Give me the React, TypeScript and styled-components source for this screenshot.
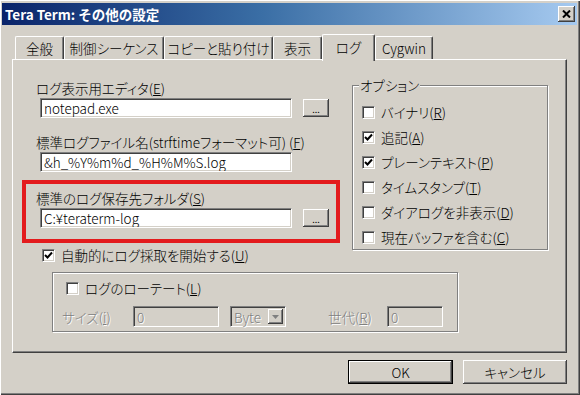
import styled, { createGlobalStyle } from "styled-components";

const face = "#d4d0c8";
const shadow = "#808080";
const darkShadow = "#404040";
const uiFont = `"Noto Sans CJK JP", "Liberation Sans", sans-serif`;

const GlobalStyle = createGlobalStyle`
  html, body {
    margin: 0;
    padding: 0;
    background: ${face};
    overflow: hidden;
  }
  body {
    font-family: ${uiFont};
    font-size: 13.5px;
    font-weight: 300;
    font-feature-settings: "palt";
    color: #000;
  }
`;

const Window = styled.div`
  box-sizing: border-box;
  width: 580px;
  height: 395px;
  padding: 3px 3px 0 2px;
  background: ${face};
  box-shadow: inset 1px 1px 0 #fff, inset -1px -1px 0 ${darkShadow},
    inset -2px -2px 0 ${shadow};
`;

const TitleBar = styled.div`
  display: flex;
  align-items: center;
  height: 22px;
  padding: 0 2px 0 3px;
  background: linear-gradient(to right, #0a246a 0%, #3a6ea5 45%, #a6caf0 100%);
`;

const TitleText = styled.span`
  color: #fff;
  font-weight: bold;
  font-size: 13.5px;
  font-feature-settings: normal;
`;

const CloseButton = styled.button`
  margin-left: auto;
  width: 17px;
  height: 16px;
  padding: 0;
  border: none;
  background: ${face};
  display: flex;
  align-items: center;
  justify-content: center;
  box-shadow: inset -1px -1px 0 ${darkShadow}, inset 1px 1px 0 #fff,
    inset -2px -2px 0 ${shadow};
`;

const Body = styled.div`
  padding: 9px 10px 0 10px;
`;

const TabStrip = styled.div`
  position: relative;
  z-index: 1;
  display: flex;
  align-items: flex-end;
  height: 27px;
  margin-bottom: -2px;
  padding-left: 3px;
`;

const Tab = styled.div<{ $width: number; $active?: boolean }>`
  box-sizing: border-box;
  width: ${(p) => p.$width}px;
  height: ${(p) => (p.$active ? 27 : 23)}px;
  margin-bottom: ${(p) => (p.$active ? 0 : 2)}px;
  display: flex;
  align-items: ${(p) => (p.$active ? "flex-start" : "center")};
  padding-top: ${(p) => (p.$active ? 4 : 0)}px;
  justify-content: center;
  background: ${face};
  border-top: 1px solid #fff;
  border-left: 1px solid #fff;
  border-right: 1px solid ${darkShadow};
  border-radius: 2px 2px 0 0;
  box-shadow: inset -1px 0 0 ${shadow};
  line-height: 16px;
`;

const Panel = styled.div`
  box-sizing: border-box;
  height: 294px;
  padding: 17px 0 0 9px;
  border-top: 1px solid #fff;
  border-left: 1px solid #fff;
  border-right: 1px solid ${darkShadow};
  border-bottom: 1px solid ${darkShadow};
  box-shadow: inset -1px -1px 0 ${shadow};
`;

const TopGrid = styled.div`
  display: grid;
  grid-template-columns: 318px 196px;
  column-gap: 12px;
  align-items: start;
`;

const LeftColumn = styled.div`
  display: flex;
  flex-direction: column;
  padding-top: 3px;
`;

const Field = styled.div<{ $inset: number; $gap?: number }>`
  padding-left: ${(p) => p.$inset}px;
  margin-top: ${(p) => p.$gap ?? 0}px;
`;

const Label = styled.div<{ $disabled?: boolean }>`
  height: 16px;
  line-height: 16px;
  white-space: nowrap;
  color: ${(p) => (p.$disabled ? shadow : "#000")};
  text-shadow: ${(p) => (p.$disabled ? "1px 1px 0 #fff" : "none")};
`;

const InputRow = styled.div`
  display: flex;
  align-items: center;
  margin-top: 2px;
  padding-left: 4px;
`;

const TextBox = styled.input<{ $width: number }>`
  box-sizing: border-box;
  width: ${(p) => p.$width}px;
  height: 20px;
  margin: 0;
  padding: 0 0 0 3px;
  font-family: ${uiFont};
  font-size: 13.5px;
  font-weight: 300;
  color: #000;
  background: #fff;
  border-top: 1px solid ${shadow};
  border-left: 1px solid ${shadow};
  border-right: 1px solid #fff;
  border-bottom: 1px solid #fff;
  box-shadow: inset 1px 1px 0 ${darkShadow}, inset -1px -1px 0 ${face};
  outline: none;

  &:disabled {
    height: 21px;
    background: ${face};
    color: ${shadow};
    text-shadow: 1px 1px 0 #fff;
  }
`;

const BrowseButton = styled.button`
  width: 26px;
  height: 18px;
  margin-left: 11px;
  padding: 0 0 3px;
  border: none;
  background: ${face};
  font-family: ${uiFont};
  font-size: 9px;
  line-height: 1;
  display: flex;
  align-items: flex-end;
  justify-content: center;
  box-shadow: inset -1px -1px 0 ${darkShadow}, inset 1px 1px 0 #fff,
    inset -2px -2px 0 ${shadow};
`;

const Highlight = styled.div`
  margin-top: 8px;
  padding: 6px 0 11px 0;
  border: 4px solid #e31b1d;
`;

const CheckRow = styled.div<{ $offset?: number }>`
  display: flex;
  align-items: center;
  gap: 6px;
  height: 16px;
  margin-left: ${(p) => p.$offset ?? 0}px;
  white-space: nowrap;
  line-height: 16px;
`;

const Box = styled.span`
  box-sizing: border-box;
  flex: none;
  width: 13px;
  height: 13px;
  display: flex;
  align-items: center;
  justify-content: center;
  background: #fff;
  border-top: 1px solid ${shadow};
  border-left: 1px solid ${shadow};
  border-right: 1px solid #fff;
  border-bottom: 1px solid #fff;
  box-shadow: inset 1px 1px 0 ${darkShadow}, inset -1px -1px 0 ${face};
`;

const OptionsGroup = styled.fieldset`
  margin: 0;
  min-width: 0;
  padding: 11px 6px 4px 6px;
  border: 1px solid ${shadow};
  box-shadow: inset 1px 1px 0 #fff, 1px 1px 0 #fff;
  display: flex;
  flex-direction: column;
  gap: 9px;
`;

const Legend = styled.legend`
  padding: 0 1px;
  background: ${face};
  line-height: 16px;
`;

const RotateGroup = styled.div`
  box-sizing: border-box;
  width: 406px;
  margin: 9px 0 0 30px;
  padding: 7px 0 4px 9px;
  border: 1px solid ${shadow};
  box-shadow: inset 1px 1px 0 #fff, 1px 1px 0 #fff;
`;

const SizeRow = styled.div`
  display: flex;
  align-items: center;
  height: 21px;
  margin-top: 10px;
`;

const RowLabel = styled(Label)<{ $width: number; $gap?: number }>`
  width: ${(p) => p.$width}px;
  margin-left: ${(p) => p.$gap ?? 0}px;
`;

const Select = styled.div`
  box-sizing: border-box;
  width: 56px;
  height: 21px;
  margin-left: 11px;
  display: flex;
  align-items: center;
  padding: 0 2px 0 3px;
  background: ${face};
  color: ${shadow};
  text-shadow: 1px 1px 0 #fff;
  border-top: 1px solid ${shadow};
  border-left: 1px solid ${shadow};
  border-right: 1px solid #fff;
  border-bottom: 1px solid #fff;
  box-shadow: inset 1px 1px 0 ${darkShadow}, inset -1px -1px 0 ${face};
`;

const SelectArrow = styled.span`
  margin-left: auto;
  width: 15px;
  height: 15px;
  display: flex;
  align-items: center;
  justify-content: center;
  box-shadow: inset -1px -1px 0 ${darkShadow}, inset 1px 1px 0 #fff,
    inset -2px -2px 0 ${shadow};
`;

const ButtonRow = styled.div`
  display: flex;
  justify-content: flex-end;
  gap: 10px;
  margin-top: 7px;
`;

const DialogButton = styled.button<{ $width: number; $default?: boolean }>`
  box-sizing: border-box;
  width: ${(p) => p.$width}px;
  height: 24px;
  padding: 0;
  font-family: ${uiFont};
  font-size: 13.5px;
  font-weight: 300;
  font-feature-settings: "palt";
  color: #000;
  background: ${face};
  border: ${(p) => (p.$default ? "1px solid #000" : "none")};
  box-shadow: inset -1px -1px 0 ${darkShadow}, inset 1px 1px 0 #fff,
    inset -2px -2px 0 ${shadow};
`;

const Check = ({ checked }: { checked?: boolean }) => (
  <Box>
    {checked && (
      <svg width="9" height="9" viewBox="0 0 9 9">
        <polyline points="1,4 3.5,6.5 8,1.5" fill="none" stroke="#000" strokeWidth="2" />
      </svg>
    )}
  </Box>
);

const options: [string, string, boolean][] = [
  ["バイナリ", "R", false],
  ["追記", "A", true],
  ["プレーンテキスト", "P", true],
  ["タイムスタンプ", "T", false],
  ["ダイアログを非表示", "D", false],
  ["現在バッファを含む", "C", false],
];

const tabs: [string, number][] = [
  ["全般", 49],
  ["制御シーケンス", 100],
  ["コピーと貼り付け", 109],
  ["表示", 49],
  ["ログ", 53],
  ["Cygwin", 58],
];

const App = () => {
  return (
    <>
      <GlobalStyle />
      <Window>
        <TitleBar>
          <TitleText>Tera Term: その他の設定</TitleText>
          <CloseButton>
            <svg width="9" height="8" viewBox="0 0 9 8">
              <path d="M1 0.5 L8 7.5 M8 0.5 L1 7.5" stroke="#000" strokeWidth="2" />
            </svg>
          </CloseButton>
        </TitleBar>
        <Body>
          <TabStrip>
            {tabs.map(([name, width]) => (
              <Tab key={name} $width={width} $active={name === "ログ"}>
                {name}
              </Tab>
            ))}
          </TabStrip>
          <Panel>
            <TopGrid>
              <LeftColumn>
                <Field $inset={14}>
                  <Label>
                    ログ表示用エディタ(<u>E</u>)
                  </Label>
                  <InputRow>
                    <TextBox $width={252} readOnly value="notepad.exe" />
                    <BrowseButton>...</BrowseButton>
                  </InputRow>
                </Field>
                <Field $inset={14} $gap={16}>
                  <Label>
                    標準ログファイル名(strftimeフォーマット可) (<u>F</u>)
                  </Label>
                  <InputRow>
                    <TextBox $width={252} readOnly value="&h_%Y%m%d_%H%M%S.log" />
                  </InputRow>
                </Field>
                <Highlight>
                  <Field $inset={10}>
                    <Label>
                      標準のログ保存先フォルダ(<u>S</u>)
                    </Label>
                    <InputRow>
                      <TextBox $width={252} readOnly value="C:¥teraterm-log" />
                      <BrowseButton>...</BrowseButton>
                    </InputRow>
                  </Field>
                </Highlight>
                <Field $inset={20} $gap={4}>
                  <CheckRow>
                    <Check checked />
                    <span>
                      自動的にログ採取を開始する(<u>U</u>)
                    </span>
                  </CheckRow>
                </Field>
              </LeftColumn>
              <OptionsGroup>
                <Legend>オプション</Legend>
                {options.map(([text, key, checked]) => (
                  <CheckRow key={key} $offset={3}>
                    <Check checked={checked} />
                    <span>
                      {text}(<u>{key}</u>)
                    </span>
                  </CheckRow>
                ))}
              </OptionsGroup>
            </TopGrid>
            <RotateGroup>
              <CheckRow $offset={4}>
                <Check />
                <span>
                  ログのローテート(<u>L</u>)
                </span>
              </CheckRow>
              <SizeRow>
                <RowLabel $width={71} $disabled>
                  サイズ(<u>i</u>)
                </RowLabel>
                <TextBox $width={86} disabled value="0" />
                <Select>
                  Byte
                  <SelectArrow>
                    <svg width="7" height="4" viewBox="0 0 7 4">
                      <path d="M0 0 H7 L3.5 4 Z" fill={shadow} />
                    </svg>
                  </SelectArrow>
                </Select>
                <RowLabel $width={59} $gap={42} $disabled>
                  世代(<u>R</u>)
                </RowLabel>
                <TextBox $width={56} disabled value="0" />
              </SizeRow>
            </RotateGroup>
          </Panel>
          <ButtonRow>
            <DialogButton $width={105} $default>
              OK
            </DialogButton>
            <DialogButton $width={104}>キャンセル</DialogButton>
          </ButtonRow>
        </Body>
      </Window>
    </>
  );
};

export default App;
